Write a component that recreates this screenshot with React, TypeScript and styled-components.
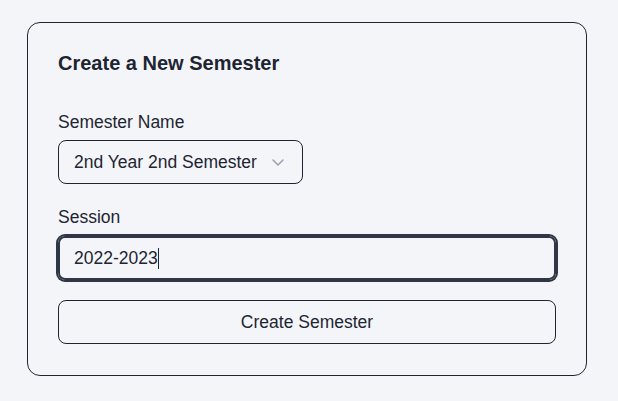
import React from "react";
import styled, { createGlobalStyle } from "styled-components";

const GlobalStyle = createGlobalStyle`
  html, body {
    margin: 0;
    padding: 0;
    background: #f4f5f9;
    font-family: "Liberation Sans", Arial, sans-serif;
    color: #1e2532;
  }
  * {
    box-sizing: border-box;
  }
`;

const Page = styled.main`
  padding: 22px 0 0 27px;
`;

const Card = styled.section`
  width: 560px;
  border: 1px solid #1e2532;
  border-radius: 13px;
  padding: 26px 30px 31px 30px;
`;

const Title = styled.h2`
  margin: 0 0 33px 0;
  font-size: 20px;
  line-height: 28px;
  font-weight: 700;
`;

const Form = styled.div`
  display: flex;
  flex-direction: column;
  gap: 20px;
`;

const Field = styled.div`
  display: flex;
  flex-direction: column;
  align-items: flex-start;
  gap: 6px;
`;

const Label = styled.label`
  font-size: 17.5px;
  line-height: 25px;
`;

const Select = styled.div`
  height: 44px;
  margin: -1px 0 1px 0;
  display: inline-flex;
  align-items: center;
  gap: 15px;
  padding: 0 18px 0 15px;
  border: 1px solid #1e2532;
  border-radius: 8px;
  font-size: 17.5px;
`;

const Chevron = styled.svg`
  width: 12px;
  height: 7px;
  flex: none;
`;

const Input = styled.div`
  width: 100%;
  height: 44px;
  display: flex;
  align-items: center;
  padding: 0 14px;
  border: 2px solid #2f3746;
  box-shadow: 0 0 0 2px #2f3746;
  border-radius: 7px;
  font-size: 17.5px;
`;

const Caret = styled.span`
  display: inline-block;
  width: 1px;
  height: 21px;
  background: #1e2532;
`;

const Button = styled.button`
  width: 100%;
  height: 44px;
  border: 1px solid #1e2532;
  border-radius: 8px;
  background: transparent;
  color: #1e2532;
  font-family: inherit;
  font-size: 17.5px;
  cursor: pointer;
`;

export default function App() {
  return (
    <Page>
      <GlobalStyle />
      <Card>
        <Title>Create a New Semester</Title>
        <Form>
          <Field>
            <Label>Semester Name</Label>
            <Select>
              2nd Year 2nd Semester
              <Chevron viewBox="0 0 12 7" fill="none">
                <path d="M1 1l5 5 5-5" stroke="#9aa0aa" strokeWidth="1.5" strokeLinecap="round" strokeLinejoin="round" />
              </Chevron>
            </Select>
          </Field>
          <Field>
            <Label>Session</Label>
            <Input>
              2022-2023
              <Caret />
            </Input>
          </Field>
          <Button>Create Semester</Button>
        </Form>
      </Card>
    </Page>
  );
}
